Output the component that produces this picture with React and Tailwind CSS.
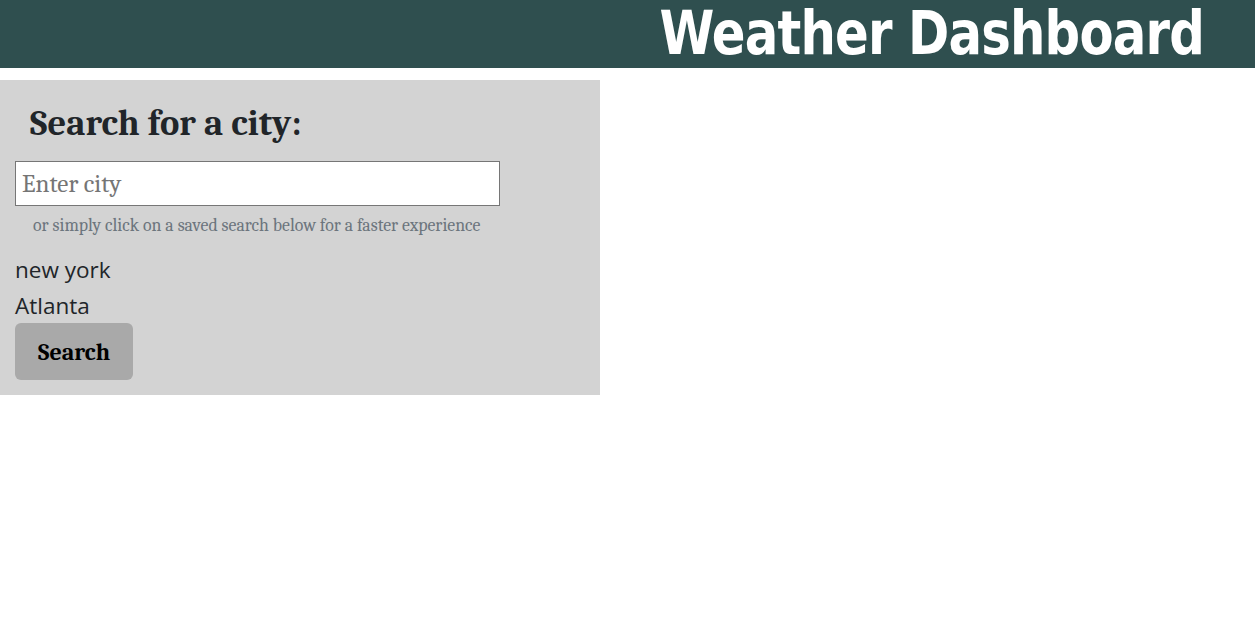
import React from 'react';

const serif = { fontFamily: "Cambria, 'Liberation Serif', 'DejaVu Serif', serif" };

export default function App() {
  const saved = ['new york', 'Atlanta'];

  return (
    <div className="min-h-screen bg-white">
      {/* header */}
      <header className="h-[68px] bg-[#2f4f4f] flex items-center justify-end pr-[51px]">
        <h1 className="text-white text-[61px] leading-none font-bold tracking-[-1px] whitespace-nowrap origin-right scale-x-[0.815] -translate-y-[2px] font-['Impact','DejaVu_Sans',sans-serif]">
          Weather Dashboard
        </h1>
      </header>

      {/* search panel */}
      <div className="mt-3 w-[600px] bg-[#d3d3d3] px-[15px] pt-[22px] pb-[15px]">
        <h2 className="pl-[15px] text-[36.5px] leading-[42px] font-bold text-[#212529]" style={serif}>
          Search for a city:
        </h2>
        <input
          type="text"
          placeholder="Enter city"
          className="mt-[17px] block w-[485px] h-[45px] bg-white border border-[#767676] px-[6px] text-[25px] placeholder:text-[#757575]"
          style={serif}
        />
        <p className="pl-[18px] mt-[8px] text-[17.8px] leading-[22px] text-[#6c757d]" style={serif}>
          or simply click on a saved search below for a faster experience
        </p>
        <ul className="mt-[16px] text-[22.5px] leading-[36px] text-[#212529] font-['Open_Sans','Noto_Sans',sans-serif]">
          {saved.map(c => (
            <li key={c}>{c}</li>
          ))}
        </ul>
        <button className="mt-[-1px] w-[118px] h-[57px] rounded-[6px] bg-[#a9a9a9] text-black text-[24px] font-bold" style={serif}>
          Search
        </button>
      </div>
    </div>
  );
}
